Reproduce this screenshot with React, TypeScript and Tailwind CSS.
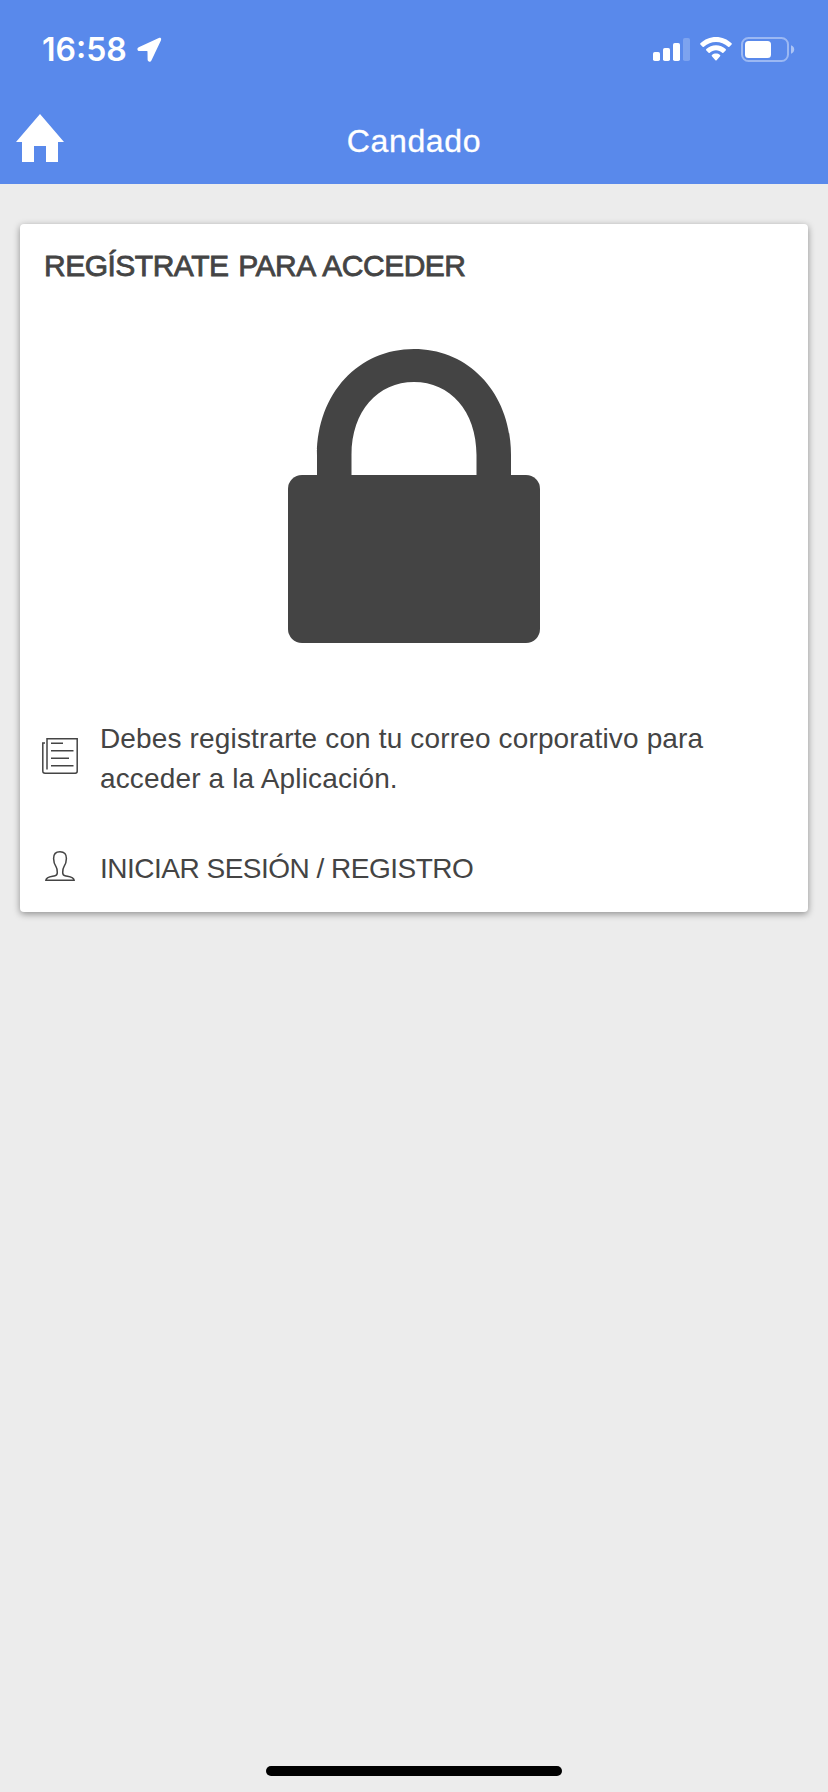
import type { ReactNode } from "react";

type RowProps = {
  icon: ReactNode;
  className?: string;
  children: ReactNode;
};

function LocationIcon() {
  return (
    <svg width="26" height="26" viewBox="0 0 26 26" fill="white">
      <path d="M21.8.9 1.7 10.3C-.3 11.3.1 14 2.400 14h7.600c.3 0 .5.2.5.5l.1 8.100c0 2.500 2.900 2.900 3.800.9L23.900 3.400C24.700 1.400 23.700.1 21.800.9Z" />
    </svg>
  );
}

function SignalIcon() {
  return (
    <svg width="38" height="24" viewBox="0 0 38 24" fill="white">
      <rect x="0" y="14" width="7" height="9" rx="1.8" />
      <rect x="10" y="10" width="7" height="13" rx="1.8" />
      <rect x="20" y="5" width="7" height="18" rx="1.8" />
      <rect x="30" y="0" width="7" height="23" rx="1.8" opacity="0.22" />
    </svg>
  );
}

function WifiIcon() {
  return (
    <svg width="32" height="24" viewBox="0 0 32 24" fill="white">
      <path d="M16 0C22 0 27.500 2.300 31.600 6.300c.4.400.400.900 0 1.300l-2.200 2.200c-.4.400-.9.400-1.300 0C24.700 6.700 20.500 5 16 5S7.300 6.700 3.900 9.800c-.4.400-.9.400-1.300 0L.4 7.600C0 7.200 0 6.700.4 6.300 4.500 2.300 10 0 16 0Z" />
      <path d="M16 8.300c3.700 0 7.100 1.400 9.700 3.800.4.400.4.900 0 1.300l-2.300 2.300c-.4.400-.8.400-1.200 0-1.700-1.500-3.800-2.400-6.200-2.400s-4.500.9-6.200 2.400c-.4.400-.8.400-1.200 0l-2.300-2.300c-.4-.4-.4-.9 0-1.300 2.600-2.400 6-3.800 9.700-3.800Z" />
      <path d="M16 16.600c1.500 0 2.900.5 4 1.400.5.400.5.800.1 1.200l-3.500 4c-.4.400-.8.400-1.200 0L11.900 19.200c-.4-.4-.4-.8.100-1.200 1.100-.9 2.500-1.400 4-1.400Z" />
    </svg>
  );
}

function BatteryIcon() {
  return (
    <svg width="54" height="26" viewBox="0 0 54 26" fill="white">
      <rect x="1" y="1" width="46" height="23" rx="6.5" fill="none" stroke="white" strokeWidth="2" opacity="0.4" />
      <path d="M50 8.3c4.3 1.200 4.300 7.200 0 8.400Z" opacity="0.5" />
      <rect x="4" y="4" width="26" height="17" rx="3.5" />
    </svg>
  );
}

function HomeIcon() {
  return (
    <svg width="48" height="48" viewBox="0 0 48 48" fill="white">
      <path d="M24 0 48 28H42V48H30V32H18V48H6V28H0Z" />
    </svg>
  );
}

function LockIcon() {
  return (
    <svg width="252" height="294" viewBox="0 0 252 294" fill="#444444">
      <rect x="0" y="126" width="252" height="168" rx="14" />
      <path d="M29 130V106C29 44 71 0 126 0s97 44 97 106V130H188.500V106C188.500 62 162 33 126 33S63.500 62 63.500 106V130Z" />
    </svg>
  );
}

function NewsIcon() {
  return (
    <svg width="36" height="36" viewBox="0 0 36 36" fill="none" stroke="#444444" strokeWidth="1.5">
      <path d="M5 31.500V.8H35.200V33.300Q35.200 35.200 33.300 35.200H3Q.8 35.200.8 33V5H3" />
      <path d="M9 5.300H21M9 12.700H31.500M9 20.200H27M9 27.700H31.500" />
    </svg>
  );
}

function UserIcon() {
  return (
    <svg width="30" height="30" viewBox="0 0 30 30" fill="none" stroke="#444444" strokeWidth="1.5">
      <path d="M15 .8C10.500.8 8.600 3.300 8.600 7.500c0 3.500 1 6 2.400 8.200 1 1.600 1.400 3.500 1.300 5.800 0 2-.6 2.900-2.300 3.300-4.500 1-8.700 1-9.100 4.400H29.100c-.4-3.400-4.600-3.400-9.100-4.400-1.700-.4-2.300-1.300-2.300-3.300-.1-2.300.3-4.200 1.300-5.800 1.400-2.200 2.400-4.700 2.400-8.200C21.400 3.300 19.500.8 15 .8Z" />
    </svg>
  );
}

function StatusBar() {
  return (
    <div className="flex h-[92px] justify-between pr-[33px] pl-[42px]">
      <div className="flex items-start">
        <span className="mt-[30px] w-[95px] font-[Inter,sans-serif] text-[32px] leading-10 font-semibold whitespace-nowrap">
          16:58
        </span>
        <span className="mt-[37px]">
          <LocationIcon />
        </span>
      </div>

      <div className="flex items-start">
        <span className="mt-[38px] mr-[9px]">
          <SignalIcon />
        </span>
        <span className="mt-[37px] mr-[9px]">
          <WifiIcon />
        </span>
        <span className="mt-[37px]">
          <BatteryIcon />
        </span>
      </div>
    </div>
  );
}

function Row({ icon, className = "", children }: RowProps) {
  return (
    <div className={`flex items-start ${className}`}>
      <span className="flex w-[80px] shrink-0 justify-center">{icon}</span>
      <div className="text-[28px] leading-10">{children}</div>
    </div>
  );
}

function App() {
  return (
    <div className="flex h-[1792px] w-[828px] flex-col bg-[#ececec] font-['Liberation_Sans',Arial,sans-serif] text-[#444444]">
      <header className="h-[184px] bg-[#5989eb] text-white">
        <StatusBar />

        <nav className="grid grid-cols-[48px_1fr_48px] items-start px-4">
          <a href="#" aria-label="Inicio" className="mt-[22px]">
            <HomeIcon />
          </a>
          <h1 className="mt-[29px] text-center text-[32px] leading-10 tracking-[0.65px] [-webkit-text-stroke:0.3px_white]">
            Candado
          </h1>
        </nav>
      </header>

      <main className="flex-1 px-5 pt-10">
        <section className="h-[688px] rounded bg-white pt-[21px] shadow-[0_2px_7px_rgba(0,0,0,0.4)]">
          <h2 className="pl-6 text-[30px] leading-[42px] tracking-[-0.5px] whitespace-nowrap [word-spacing:2px] [-webkit-text-stroke:0.8px_#444444]">
            REGÍSTRATE PARA ACCEDER
          </h2>

          <div className="mt-[62px] flex justify-center">
            <LockIcon />
          </div>

          <Row
            className="mt-[76px]"
            icon={
              <span className="mt-[19px]">
                <NewsIcon />
              </span>
            }
          >
            <p className="tracking-[0.15px] whitespace-nowrap">
              Debes registrarte con tu correo corporativo para
              <br />
              acceder a la Aplicación.
            </p>
          </Row>

          <Row
            className="mt-[50px]"
            icon={
              <span className="mt-[2px]">
                <UserIcon />
              </span>
            }
          >
            <a href="#" className="tracking-[-0.5px] whitespace-nowrap">
              INICIAR SESIÓN / REGISTRO
            </a>
          </Row>
        </section>
      </main>

      <footer className="flex justify-center pb-4">
        <div className="h-[10px] w-[296px] rounded-full bg-black" />
      </footer>
    </div>
  );
}

export default App;
